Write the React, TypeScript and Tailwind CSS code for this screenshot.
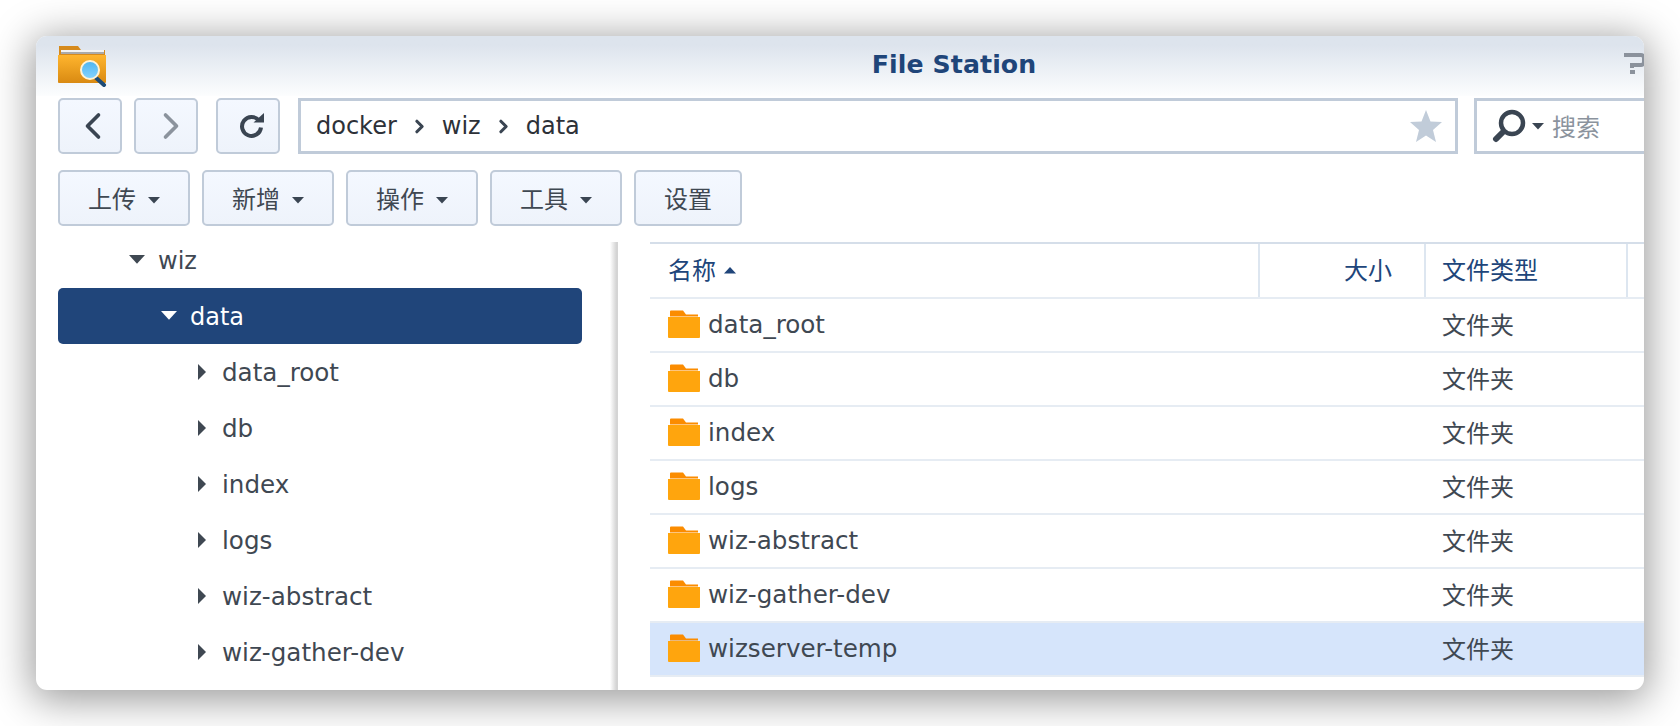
import React from 'react';
import { ChevronLeft, ChevronRight } from 'lucide-react';

const fontStack = "font-['DejaVu_Sans','Noto_Sans_CJK_SC',sans-serif]";

const Caret: React.FC<{ dir?: 'down' | 'right' | 'up'; className?: string; size?: number }> = ({ dir = 'down', className, size = 12 }) => {
  const points = dir === 'down' ? '0,0 12,0 6,6.5' : dir === 'up' ? '0,6.5 12,6.5 6,0' : '0,0 7,7 0,14';
  const box = dir === 'right' ? '0 0 7 14' : '0 0 12 7';
  const w = dir === 'right' ? 8 : size;
  const h = dir === 'right' ? 16 : (size * 7) / 12;
  return (
    <svg width={w} height={h} viewBox={box} className={className}>
      <polygon points={points} fill="currentColor" />
    </svg>
  );
};

const FolderIcon = () => (
  <svg width="32" height="28" viewBox="0 0 32 28" className="shrink-0 mb-[2px]">
    <path d="M2 1.5 a1 1 0 0 1 1-1 h12 l3 4 h12 v2 h-28z" fill="#fb8c00" />
    <path d="M0 7 h32 v20 a1 1 0 0 1-1 1 h-30 a1 1 0 0 1-1-1z" fill="#ffa50d" />
  </svg>
);

const AppIcon = () => (
  <svg width="50" height="42" viewBox="0 0 50 42" className="shrink-0">
    <defs>
      <linearGradient id="fb" x1="0" y1="0" x2="0" y2="1">
        <stop offset="0" stopColor="#ffb52e" />
        <stop offset="1" stopColor="#d98a12" />
      </linearGradient>
      <linearGradient id="lens" x1="0" y1="0" x2="0" y2="1">
        <stop offset="0" stopColor="#4fb4f0" />
        <stop offset="1" stopColor="#86d4ff" />
      </linearGradient>
    </defs>
    <path d="M1 1 h19 l3 4 h24 v10 h-46z" fill="#d68a1c" />
    <rect x="3" y="5" width="43" height="2" fill="#f3f3f3" />
    <rect x="3" y="7" width="43" height="2" fill="#aaa" />
    <path d="M0 10 h48 v27 a1 1 0 0 1-1 1 h-46 a1 1 0 0 1-1-1z" fill="url(#fb)" />
    <path d="M36 31 l10 9" stroke="#1c4a75" strokeWidth="4" strokeLinecap="round" />
    <circle cx="32" cy="25" r="9" fill="url(#lens)" stroke="#fff3d6" strokeWidth="2" />
  </svg>
);

const RefreshIcon = () => (
  <svg width="26" height="26" viewBox="0 0 26 26">
    <path d="M20 7.5 A9.5 9.5 0 1 0 22 14.5" fill="none" stroke="#3a4552" strokeWidth="4" />
    <polygon points="14.5,9.5 25,9.5 25,0" fill="#3a4552" />
  </svg>
);

const SearchIcon = () => (
  <svg width="34" height="34" viewBox="0 0 34 34">
    <circle cx="20" cy="14" r="11" fill="none" stroke="#3a4552" strokeWidth="4.5" />
    <path d="M11 23 L4 30" stroke="#3a4552" strokeWidth="6" strokeLinecap="round" />
  </svg>
);

const HelpIcon = () => (
  <svg width="20" height="22" viewBox="0 0 20 22" className="shrink-0">
    <path d="M0 2 h17 a3 3 0 0 1 3 3 v4 a3 3 0 0 1-3 3 h-9 v3" fill="none" stroke="#8b929c" strokeWidth="4" />
    <rect x="6" y="17" width="5" height="4" fill="#8b929c" />
  </svg>
);

const btn = 'bg-gradient-to-b from-[#f4f8ff] to-[#eef3fb] border-[2px] border-[#c0cbd9] rounded-[5px] flex items-center justify-center';

const ToolButton: React.FC<{ label: string; caret?: boolean; width: string }> = ({ label, caret = true, width }) => (
  <div className={`${btn} ${width} h-[56px] gap-[12px] text-[24px] text-[#3f4852]`}>
    <span className="mt-[4px]">{label}</span>
    {caret && <Caret className="text-[#3a4552] mt-[5px]" />}
  </div>
);

const treeRows = ['data_root', 'db', 'index', 'logs', 'wiz-abstract', 'wiz-gather-dev'];
const fileRows = ['data_root', 'db', 'index', 'logs', 'wiz-abstract', 'wiz-gather-dev', 'wizserver-temp'];

export default function App() {
  return (
    <div className={`w-[1680px] h-[726px] bg-white overflow-hidden pt-[36px] pl-[36px] ${fontStack}`}>
      <div className="w-[1608px] h-[654px] bg-white rounded-[11px] overflow-hidden shadow-[0_6px_40px_4px_rgba(0,0,0,0.4)] flex flex-col relative">
        <div className="h-[60px] bg-gradient-to-b from-[#dde4ed] from-15% to-[#fcfdfe] pl-[22px] flex items-center shrink-0 relative">
          <AppIcon />
          <div className="flex-1 text-center font-bold text-[25.2px] text-[#1f4579] pl-[156px] mt-[-2px] tracking-[0.1px]">File Station</div>
          <div className="absolute right-0 top-[17px]"><HelpIcon /></div>
        </div>

        <div className="flex items-center h-[56px] mt-[2px] pl-[22px] shrink-0">
          <div className={`${btn} w-[64px] h-[56px] mr-[12px]`}>
            <ChevronLeft size={44} strokeWidth={2} className="text-[#3a4552] ml-[6px] shrink-0" />
          </div>
          <div className={`${btn} w-[64px] h-[56px] mr-[18px]`}>
            <ChevronRight size={44} strokeWidth={2} className="text-[#8b939d] ml-[10px] shrink-0" />
          </div>
          <div className={`${btn} w-[64px] h-[56px] mr-[18px]`}>
            <div className="ml-[8px]"><RefreshIcon /></div>
          </div>
          <div className="w-[1160px] h-[56px] border-[3px] border-[#c0cbd9] bg-white flex items-center pl-[15px] text-[24px] text-[#2d3138] mr-[16px] shrink-0 relative">
            <span>docker</span>
            <ChevronRight size={21} strokeWidth={3.6} className="text-[#3a4552] mx-[12px]" />
            <span>wiz</span>
            <ChevronRight size={21} strokeWidth={3.6} className="text-[#3a4552] mx-[12px]" />
            <span>data</span>
            <svg width="34" height="32" viewBox="0 0 34 32" className="ml-auto mr-[12px]">
              <polygon points="17,0 21.5,11.5 33,12 24,20 27,32 17,25.5 7,32 10,20 1,12 12.5,11.5" fill="#c1ccd9" />
            </svg>
          </div>
          <div className="flex-1 h-[56px] border-y-[3px] border-l-[3px] border-[#c0cbd9] bg-white flex items-center pl-[15px] text-[24px] text-[#8b939d]">
            <SearchIcon />
            <Caret className="text-[#3a4552] ml-[6px] mr-[8px]" />
            <span className="mt-[4px]">搜索</span>
          </div>
        </div>

        <div className="flex items-center gap-[12px] h-[56px] mt-[16px] pl-[22px] shrink-0">
          <ToolButton label="上传" width="w-[132px]" />
          <ToolButton label="新增" width="w-[132px]" />
          <ToolButton label="操作" width="w-[132px]" />
          <ToolButton label="工具" width="w-[132px]" />
          <ToolButton label="设置" caret={false} width="w-[108px]" />
        </div>

        <div className="flex flex-1 min-h-0 mt-[16px]">
          <div className="w-[574px] shrink-0 pl-[22px] pr-[28px] text-[24px] text-[#3f4852]">
            <div className="h-[56px] flex items-center pl-[71px] gap-[13px] mt-[-10px]">
              <Caret size={16} className="text-[#3f4852]" />
              <span className="mt-[2px]">wiz</span>
            </div>
            <div className="h-[56px] flex items-center pl-[103px] gap-[13px] bg-[#20457a] rounded-[5px] text-white">
              <Caret size={16} />
              <span className="mt-[2px]">data</span>
            </div>
            {treeRows.map(name => (
              <div key={name} className="h-[56px] flex items-center pl-[140px] gap-[16px]">
                <Caret dir="right" className="text-[#3f4852]" />
                <span className="mt-[2px] text-[24.6px]">{name}</span>
              </div>
            ))}
          </div>

          <div className="w-[8px] shrink-0 bg-gradient-to-r from-[#ffffff] to-[#d6d6d6] border-r-[2px] border-[#d4d4d4]" />

          <div className="flex-1 ml-[32px] min-w-0 text-[24px] text-[#3f4852]">
            <div className="h-[57px] border-y-[2px] border-t-[#d5dee9] border-b-[#e6ecf3] flex text-[#20457a]">
              <div className="w-[610px] flex items-center pl-[18px] gap-[8px] border-r-[2px] border-[#dde6f0]">
                <span>名称</span>
                <Caret dir="up" className="text-[#20457a]" />
              </div>
              <div className="w-[166px] flex items-center justify-end pr-[32px] border-r-[2px] border-[#dde6f0]">大小</div>
              <div className="w-[202px] flex items-center pl-[16px] border-r-[2px] border-[#dde6f0]">文件类型</div>
            </div>
            {fileRows.map((name, i) => (
              <div
                key={name}
                className={`h-[54px] flex items-center border-b-[2px] border-[#e6ecf3] ${i === fileRows.length - 1 ? 'bg-[#d6e5fb]' : ''}`}
              >
                <div className="w-[776px] flex items-center pl-[18px] gap-[8px]">
                  <FolderIcon />
                  <span className="text-[24.6px]">{name}</span>
                </div>
                <div className="pl-[16px] mt-[2px]">文件夹</div>
              </div>
            ))}
          </div>
        </div>
      </div>
    </div>
  );
}
